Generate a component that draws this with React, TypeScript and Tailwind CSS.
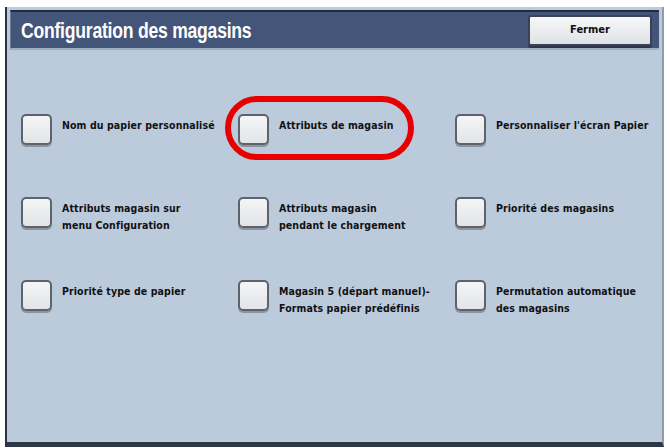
import React from 'react';

const items: string[][] = [
  ['Nom du papier personnalisé'],
  ['Attributs de magasin'],
  ["Personnaliser l'écran Papier"],
  ['Attributs magasin sur', 'menu Configuration'],
  ['Attributs magasin', 'pendant le chargement'],
  ['Priorité des magasins'],
  ['Priorité type de papier'],
  ['Magasin 5 (départ manuel)-', 'Formats papier prédéfinis'],
  ['Permutation automatique', 'des magasins'],
];

const Option: React.FC<{ lines: string[] }> = ({ lines }) => (
  <div className="flex items-start gap-[10px]">
    <div className="w-[31px] h-[31px] shrink-0 rounded-[5px] border-2 border-[#5d636d] bg-gradient-to-b from-[#f4f5f6] to-[#e2e4e7] shadow-[0_2px_0_#8d939c]" />
    <div className="pt-[3px] text-[10.5px] leading-[17px] font-bold text-[#111] tracking-[0.1px]">
      {lines.map((l) => (
        <div key={l}>{l}</div>
      ))}
    </div>
  </div>
);

export default function App() {
  return (
    <div className="w-[670px] h-[448px] bg-white pt-[7px] pl-[5px] font-['DejaVu_Sans_Condensed','DejaVu_Sans',sans-serif]">
      <div className="w-[659px] h-[440px] flex flex-col bg-[#bccbdc] border-l-2 border-[#2c3444] border-r-2 border-r-[#8e9cb0] border-b-[5px] border-b-[#2f3646]">
        <div className="mx-[3px] mt-[3px] h-[40px] flex items-center justify-between bg-[#44557a] border-t-2 border-t-[#1f2b44] border-b-2 border-b-[#9fb0c6] border-l border-l-[#6a7ca0] pl-[10px] pr-[7px]">
          <div className="pt-[2px] text-white font-bold text-[22px] leading-none tracking-[-0.3px] origin-left scale-x-[0.8] whitespace-nowrap font-['Liberation_Sans_Narrow','Liberation_Sans',sans-serif]">
            Configuration des magasins
          </div>
          <button className="w-[124px] h-[31px] rounded-[3px] border-2 border-[#3a4258] bg-gradient-to-b from-[#f6f7f8] to-[#dfe2e6] shadow-[0_2px_0_#2b3347] text-[11px] font-bold text-[#111]">
            Fermer
          </button>
        </div>
        <div className="relative flex-1">
          <div className="grid grid-cols-[217px_217px_217px] auto-rows-[83px] pl-[14px] pt-[64px]">
            {items.map((lines) => (
              <Option key={lines[0]} lines={lines} />
            ))}
          </div>
          <div className="absolute left-[218px] top-[46px] w-[189px] h-[64px] rounded-full border-[6px] border-[#e80000]" />
        </div>
      </div>
    </div>
  );
}
